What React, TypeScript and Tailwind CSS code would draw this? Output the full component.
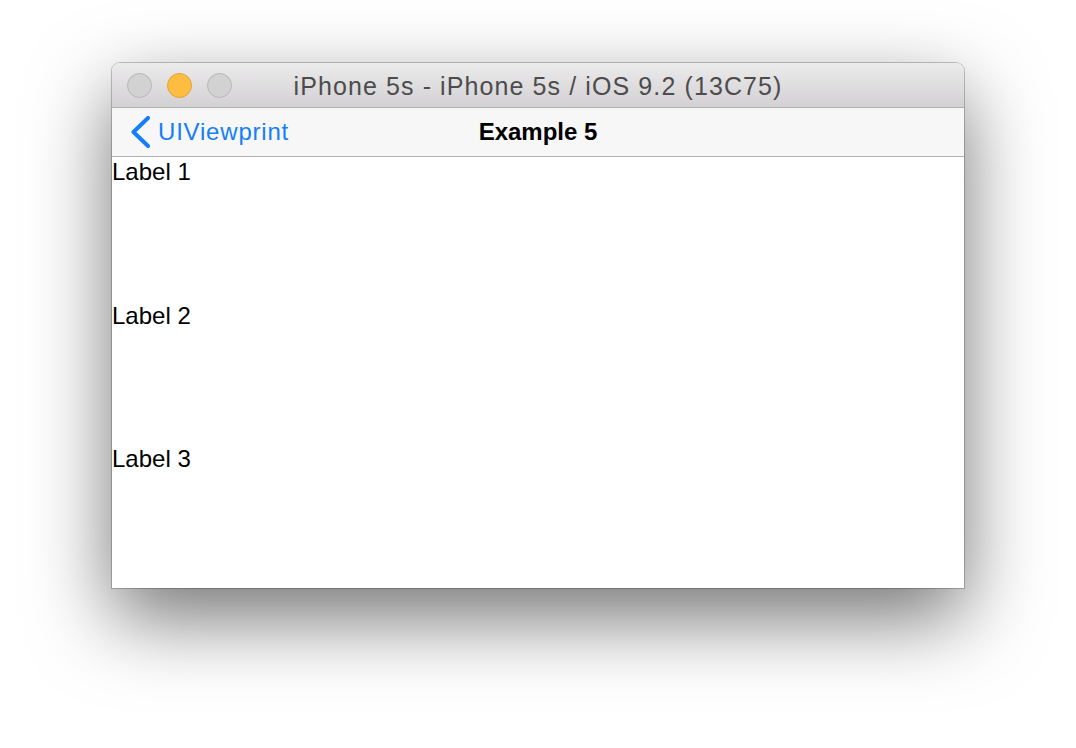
import React from 'react';

const labels = ['Label 1', 'Label 2', 'Label 3'];

function TrafficLight({ color }: { color: 'grey' | 'yellow' }) {
    const cls =
        color === 'yellow'
            ? 'bg-[#fdbd41] border-[#e0a435]'
            : 'bg-[#d3d2d3] border-[#b8b7b8]';
    return <div className={`h-[25px] w-[25px] rounded-full border ${cls}`} />;
}

export default function App() {
    return (
        <div className="min-h-screen bg-white pt-[63px] font-['Liberation_Sans',Arial,sans-serif]">
            <div className="mx-auto w-[852px] rounded-t-[8px] bg-white shadow-[0_0_0_1px_rgba(0,0,0,0.22),0_30px_80px_rgba(0,0,0,0.55)]">
                {/* title bar */}
                <div className="relative flex h-[45px] items-center rounded-t-[8px] border-b border-[#b1b0b1] bg-gradient-to-b from-[#ecebec] to-[#d3d1d3] px-[15px]">
                    <div className="flex gap-[15px]">
                        <TrafficLight color="grey" />
                        <TrafficLight color="yellow" />
                        <TrafficLight color="grey" />
                    </div>
                    <div className="absolute inset-0 flex items-center justify-center pt-[3px] text-[25px] tracking-[1.1px] text-[#4d4c4d]">
                        iPhone 5s - iPhone 5s / iOS 9.2 (13C75)
                    </div>
                </div>

                {/* nav bar */}
                <div className="relative flex h-[49px] items-center border-b border-[#b2b2b2] bg-[#f7f7f7] pl-[18px]">
                    <svg width="21" height="32" viewBox="0 0 21 32" className="mr-[7px]">
                        <polyline
                            points="18,2 3.5,16 18,30"
                            fill="none"
                            stroke="#157efb"
                            strokeWidth="4"
                            strokeLinecap="round"
                            strokeLinejoin="round"
                        />
                    </svg>
                    <span className="text-[24px] tracking-[0.8px] text-[#157efb]">UIViewprint</span>
                    <div className="absolute inset-0 flex items-center justify-center text-[24px] font-bold text-black">
                        Example 5
                    </div>
                </div>

                {/* content */}
                <div className="flex h-[431px] flex-col bg-white">
                    {labels.map((label) => (
                        <div key={label} className="h-[144px]">
                            <p className="text-[24px] leading-[29px] text-black">{label}</p>
                        </div>
                    ))}
                </div>
            </div>
        </div>
    );
}
